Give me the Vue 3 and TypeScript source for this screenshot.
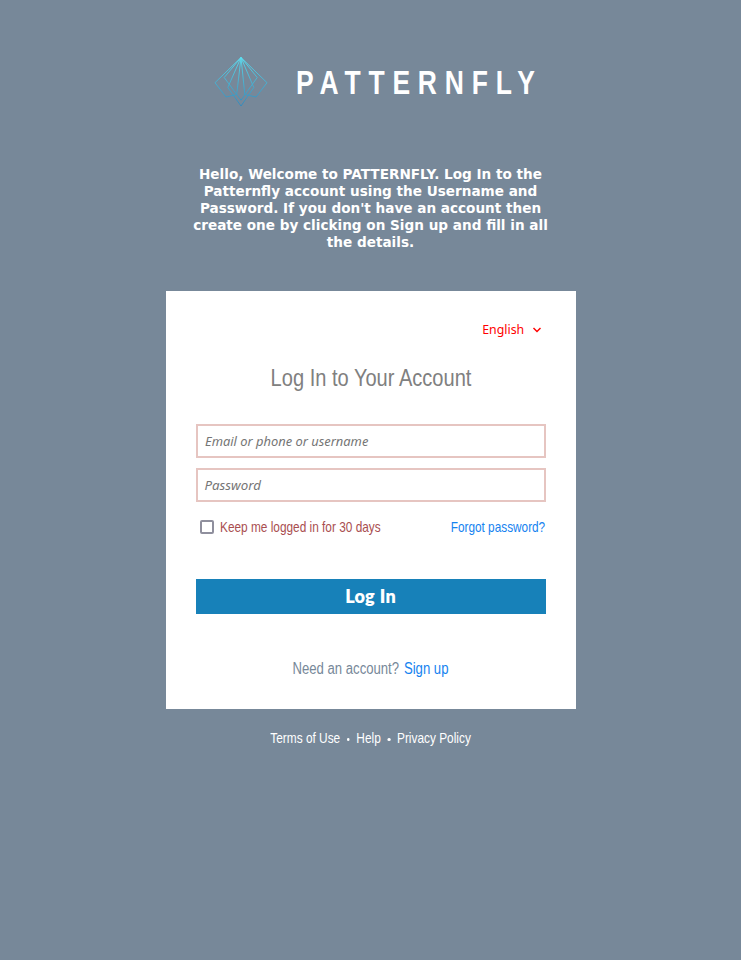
<script setup lang="ts">
import { ref } from 'vue'

const username = ref('')
const password = ref('')
const keep = ref(false)
</script>

<template>
  <main class="page">
    <header class="brand">
      <svg class="logo" viewBox="0 0 80 75" aria-hidden="true">
        <defs>
          <linearGradient id="fly" gradientUnits="userSpaceOnUse" x1="0" y1="12" x2="0" y2="62">
            <stop offset="0" stop-color="#5ce0f2" />
            <stop offset="0.5" stop-color="#45b5d6" />
            <stop offset="1" stop-color="#2b88be" />
          </linearGradient>
        </defs>
        <g fill="none" stroke="url(#fly)" stroke-width="0.9">
          <path d="M41 12.5 15 37.7 26 52 36.7 49.5Z" />
          <path d="M41 12.5 67 37.7 56 52 44.8 49.5Z" />
          <path d="M41 12.5 24.2 32.5 41 55.2 57.2 32.5Z" />
          <path d="M41 12.5 27.8 42.5 41 61 53.8 42.5Z" />
        </g>
      </svg>
      <h1 class="name">PATTERNFLY</h1>
    </header>

    <p class="welcome">Hello, Welcome to PATTERNFLY. Log In to the Patternfly account using the Username and Password. If you don't have an account then create one by clicking on Sign up and fill in all the details.</p>

    <section class="card">
      <div class="language">
        <span class="lang-label">English</span>
        <svg class="chevron" viewBox="0 0 10 8" aria-hidden="true"><path d="M1.5 2 5 5.6 8.5 2" /></svg>
      </div>
      <h2 class="title">Log In to Your Account</h2>
      <form @submit.prevent>
        <label class="field">
          <input v-model="username" type="text" aria-label="Email or phone or username" />
          <span v-if="!username" class="hint">Email or phone or username</span>
        </label>
        <label class="field">
          <input v-model="password" type="password" aria-label="Password" />
          <span v-if="!password" class="hint short">Password</span>
        </label>
        <div class="options">
          <label class="keep"><input v-model="keep" type="checkbox" /><span class="keep-label">Keep me logged in for 30 days</span></label>
          <a class="link forgot">Forgot password?</a>
        </div>
        <button class="submit" type="submit">Log In</button>
      </form>
      <p class="signup"><span>Need an account?</span><a class="link">Sign up</a></p>
    </section>

    <footer class="footer">
      <span>Terms of Use</span><i class="dot"></i><span>Help</span><i class="dot"></i><span>Privacy Policy</span>
    </footer>
  </main>
</template>

<style>
body {
  margin: 0;
  background: #778899;
}
</style>

<style scoped>
.page {
  box-sizing: border-box;
  height: 960px;
  padding-top: 45px;
  display: flex;
  flex-direction: column;
  align-items: center;
  background: #778899;
  font-family: "Liberation Sans", Arial, sans-serif;
}
.brand {
  display: flex;
  width: 341px;
  height: 75px;
}
.logo {
  width: 80px;
  height: 75px;
  flex: none;
}
.name {
  margin: 0 0 0 16px;
  color: #fff;
  font-size: 32.5px;
  line-height: 77px;
  font-weight: 700;
  letter-spacing: 9.6px;
  white-space: nowrap;
  transform: scaleX(0.814);
  transform-origin: left;
}
.welcome {
  width: 370px;
  margin: 46px 0 0;
  color: #fff;
  font: 700 13.6px/17px "DejaVu Sans", sans-serif;
  text-align: center;
}
.card {
  box-sizing: border-box;
  width: 410px;
  height: 418px;
  margin-top: 40px;
  padding: 28px 30px 0;
  background: #fff;
}
.language {
  display: flex;
  justify-content: flex-end;
  align-items: center;
  height: 20px;
  padding-right: 4px;
  color: #f00;
  font: 13px/20px "Noto Sans", sans-serif;
}
.lang-label {
  transform: scaleX(0.95);
  transform-origin: right;
}
.chevron {
  width: 10px;
  height: 8px;
  margin: 1px 0 0 7.5px;
  fill: none;
  stroke: #f00;
  stroke-width: 1.4;
}
.title {
  margin: 24px 0 31px;
  color: gray;
  font-size: 24px;
  line-height: 30px;
  font-weight: 400;
  text-align: center;
  transform: scaleX(0.836);
}
.field {
  display: grid;
  align-items: center;
  height: 34px;
  margin-bottom: 10px;
}
.field > * {
  grid-area: 1 / 1;
}
.field input {
  box-sizing: border-box;
  width: 350px;
  height: 34px;
  padding: 0 8px;
  border: 2px solid #e6c5c1;
  outline: none;
  background: #fff;
}
.hint {
  z-index: 1;
  justify-self: start;
  margin-left: 9px;
  color: #757575;
  font: italic 13.3px/20px "Noto Sans", sans-serif;
  transform: scaleX(0.97);
  transform-origin: left;
  pointer-events: none;
}
.hint.short {
  transform: scaleX(1);
}
.options {
  display: flex;
  justify-content: space-between;
  height: 30px;
  line-height: 30px;
  font-size: 14.4px;
}
.keep {
  display: flex;
  align-items: center;
  color: #a94e50;
}
.keep input {
  appearance: none;
  box-sizing: border-box;
  width: 14px;
  height: 14px;
  margin: 0 6px 0 4px;
  border: 2px solid #8f8f9d;
  border-radius: 2px;
  background: #fff;
}
.keep-label {
  transform: scaleX(0.823);
  transform-origin: left;
}
.link {
  color: #1683f0;
}
.forgot {
  transform: scaleX(0.82);
  transform-origin: right;
}
.submit {
  display: block;
  width: 350px;
  height: 35px;
  margin-top: 37px;
  padding: 0;
  border: 0;
  background: #1781b9;
  color: #fff;
  font: 800 18px/35px Lato, sans-serif;
  letter-spacing: 0.2px;
  word-spacing: 0.5px;
}
.signup {
  display: flex;
  justify-content: center;
  gap: 6px;
  margin: 45px 1px 0 0;
  color: #778899;
  font-size: 16px;
  line-height: 20px;
  transform: scaleX(0.82);
}
.footer {
  display: flex;
  align-items: center;
  gap: 8px;
  margin-top: 19px;
  color: #fff;
  font-size: 14.4px;
  line-height: 20px;
  transform: scaleX(0.825);
}
.dot {
  width: 3.6px;
  height: 3px;
  margin-top: 2px;
  border-radius: 50%;
  background: #fff;
}
</style>
